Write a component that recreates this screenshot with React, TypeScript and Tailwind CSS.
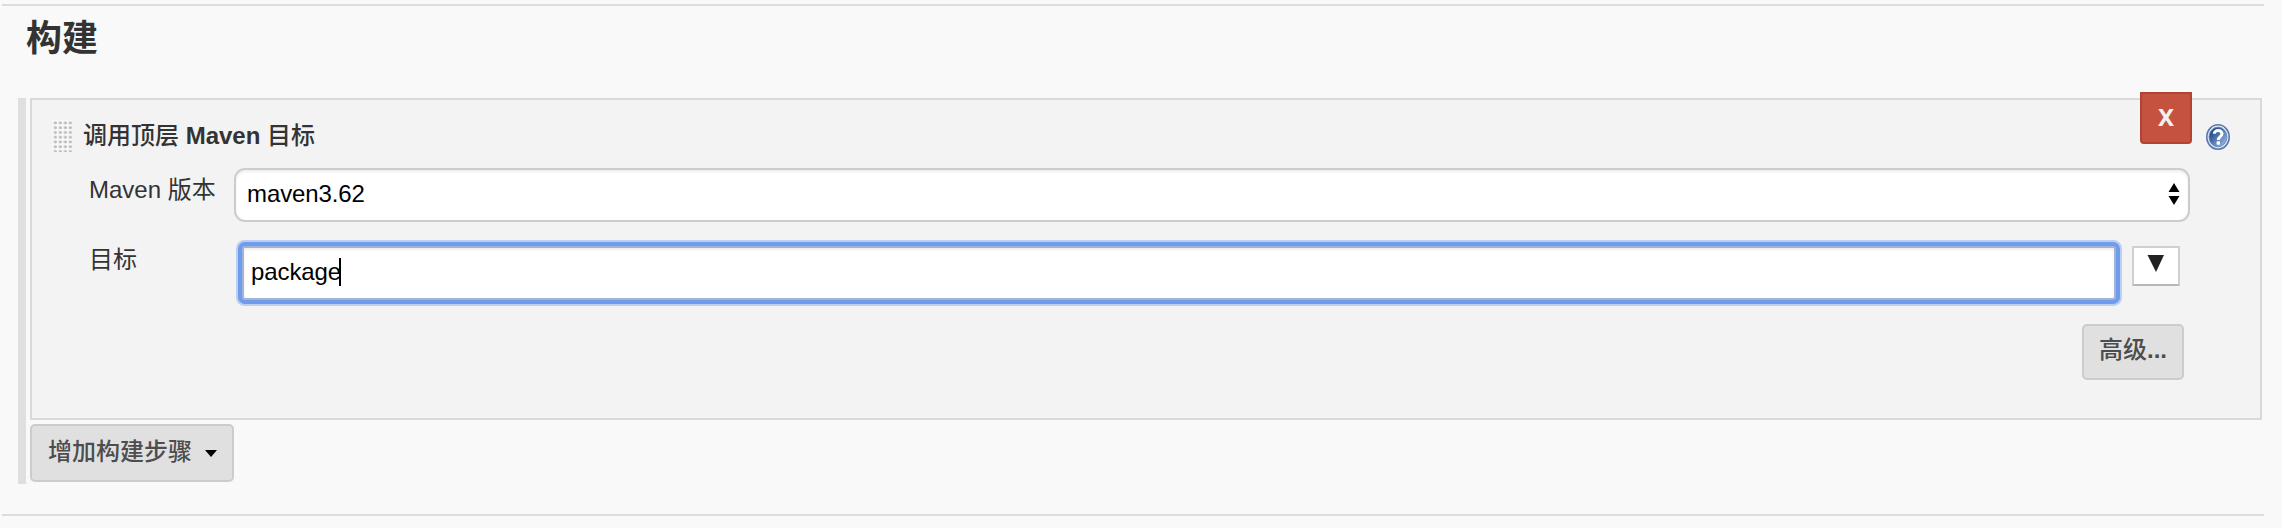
import React from "react";

function Grip() {
  const cols = [0, 1, 2, 3];
  const rows = [0, 1, 2, 3, 4, 5, 6];
  return (
    <svg width="20" height="32" viewBox="0 0 20 32" className="shrink-0 cursor-move">
      <rect width="20" height="32" fill="#f8f8f8" />
      {rows.map((r) =>
        cols.map((c) => {
          const x = 1.4 + c * 5;
          const y = 1.3 + r * 4.75;
          return (
            <g key={`${r}-${c}`}>
              <rect x={x} y={y} width="3.2" height="3.2" rx="1" fill="#dadada" />
              <rect x={x + 1.2} y={y + 0.6} width="2.1" height="2.2" rx="0.6" fill="#b8b8b5" />
            </g>
          );
        })
      )}
    </svg>
  );
}

function HelpIcon() {
  return (
    <svg width="24" height="26" viewBox="0 0 24 26" className="shrink-0">
      <defs>
        <linearGradient id="helpFill" x1="0" y1="0" x2="1" y2="1">
          <stop offset="0.25" stopColor="#2c5596" />
          <stop offset="1" stopColor="#a9c4e6" />
        </linearGradient>
      </defs>
      <ellipse cx="12" cy="13" rx="11.2" ry="12.2" fill="#e8eef6" stroke="#5577ab" strokeWidth="1.6" />
      <ellipse cx="12" cy="13" rx="9" ry="9.9" fill="url(#helpFill)" stroke="#6484b5" strokeWidth="0.8" />
      <path
        d="M8.3 9.8 C8.3 5.4 16 5.4 16 9.8 C16 12.6 12.3 12.6 12.3 16"
        fill="none"
        stroke="#fff"
        strokeWidth="3"
      />
      <rect x="10.6" y="17.3" width="3.4" height="3.4" rx="0.8" fill="#fff" />
    </svg>
  );
}

export default function App() {
  return (
    <div className="flex h-[528px] w-[2282px] flex-col overflow-hidden bg-[#f9f9f9] pl-[2px] pr-[18px] pt-[4px] font-['Liberation_Sans','Noto_Sans_CJK_SC',sans-serif] text-[24px] leading-[36px] text-[#333]">
      <div className="h-[2px] shrink-0 bg-[#ddd]" />
      <h2 className="mt-[3px] h-[52px] shrink-0 pl-[24px] font-['Noto_Sans_CJK_SC',sans-serif] text-[36px] font-bold leading-[52px]">
        构建
      </h2>

      <section className="ml-[16px] mr-[2px] mt-[37px] flex h-[386px] shrink-0 flex-col border-l-8 border-[#dfdfdf] pl-[4px]">
        <div className="flex h-[322px] shrink-0 flex-col border-2 border-[#d9d9d9] bg-[#f3f3f3]">
          <div className="flex h-[68px] shrink-0 items-start pl-[20px] pr-[30px]">
            <div className="flex grow items-center pt-[20px]">
              <Grip />
              <div className="ml-[11px] whitespace-pre font-medium leading-[32px]">
                调用顶层 <b className="font-bold">Maven</b> 目标
              </div>
            </div>
            <button className="-mt-[8px] h-[52px] w-[52px] shrink-0 rounded-b-[4px] border-2 border-[#b04334] bg-[#c5513f] pb-[2px] font-['Noto_Sans',sans-serif] text-[24px] font-bold leading-[44px] text-[#f0f0f0]">
              X
            </button>
            <div className="ml-[14px] flex pt-[24px]">
              <HelpIcon />
            </div>
          </div>

          <div className="flex h-[54px] shrink-0 items-start">
            <label className="w-[202px] shrink-0 pl-[57px] pt-[4px]">Maven 版本</label>
            <div className="flex h-[54px] w-[1956px] items-center justify-between rounded-[11px] border-2 border-[#ccc] bg-white pl-[11px] pr-[8px] text-black shadow-[inset_0_2px_3px_rgba(0,0,0,0.07)]">
              <span className="pb-[2px] tracking-[-0.1px]">maven3.62</span>
              <svg width="12" height="22" viewBox="0 0 12 22" className="mt-[-3px]">
                <path d="M6 0 L11.5 9 H0.5 Z M0.5 13 H11.5 L6 22 Z" fill="#000" />
              </svg>
            </div>
          </div>

          <div className="mt-[24px] flex h-[54px] shrink-0 items-start">
            <label className="-mt-[4px] w-[210px] shrink-0 pl-[57px]">目标</label>
            <div className="flex h-[54px] w-[1874px] shrink-0 items-center rounded-[3px] border-2 border-[#a2b3d3] bg-white pb-[2px] pl-[7px] text-black shadow-[inset_0_2px_3px_rgba(0,0,0,0.07),0_0_0_4px_#6f9ced,0_0_0_6px_#bccff1]">
              <span className="tracking-[-0.1px]">package</span>
              <span className="-ml-[2px] h-[28px] w-[2px] bg-black" />
            </div>
            <button className="ml-[16px] flex h-[40px] w-[48px] items-start justify-center border-2 border-[#d0d0d0] border-b-[#b8b8b8] bg-white pt-[7px]">
              <svg width="18" height="17" viewBox="0 0 18 17">
                <path d="M0.5 0 H17 L9 17 Z" fill="#222" />
              </svg>
            </button>
          </div>

          <div className="mt-[24px] flex shrink-0 justify-end pr-[76px]">
            <button className="h-[56px] w-[102px] rounded-[5px] border-2 border-[#ccc] bg-[#e0e0e0] pb-[8px] font-['Noto_Sans_CJK_SC',sans-serif] font-medium leading-[44px] text-[#4d4d4d]">
              高级<span className="font-['Liberation_Sans',sans-serif] font-bold">...</span>
            </button>
          </div>
        </div>

        <button className="mt-[4px] flex h-[58px] w-[204px] shrink-0 items-center rounded-[5px] border-2 border-[#ccc] bg-[#e0e0e0] pl-[16px] font-medium text-[#4d4d4d]">
          <span className="pb-[2px]">增加构建步骤</span>
          <svg width="12" height="7" viewBox="0 0 12 7" className="ml-[13px]">
            <path d="M0 0 H12 L6 7 Z" fill="#000" />
          </svg>
        </button>
      </section>

      <div className="mt-[30px] h-[2px] shrink-0 bg-[#ddd]" />
    </div>
  );
}
